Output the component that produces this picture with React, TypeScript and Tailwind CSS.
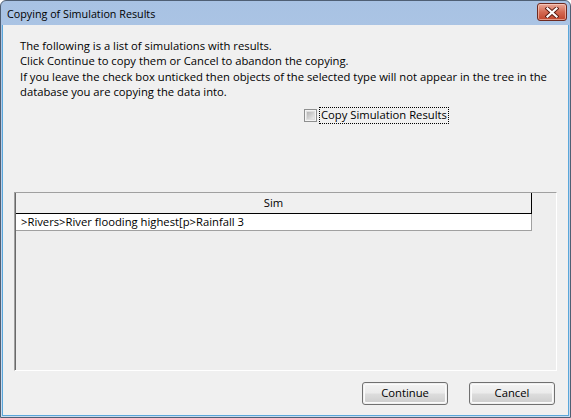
import React from "react";

const font = { fontFamily: '"Open Sans", "Noto Sans", sans-serif' };

function CloseButton() {
  return (
    <div className="w-[30px] h-[18px] rounded-[3px] border border-[#6e2a20] bg-gradient-to-b from-[#e9a99a] via-[#d46a52] to-[#c0442b] flex items-center justify-center shadow-[inset_0_0_0_1px_rgba(255,220,210,0.55)]">
      <svg width="14" height="11" viewBox="0 0 14 11">
        <path d="M2.5 1.5 L11.5 9.5 M11.5 1.5 L2.5 9.5" stroke="#5a1d14" strokeWidth="4" strokeLinecap="square" />
        <path d="M2.5 1.5 L11.5 9.5 M11.5 1.5 L2.5 9.5" stroke="#ffffff" strokeWidth="2.2" strokeLinecap="square" />
      </svg>
    </div>
  );
}

function Button({ label }: { label: string }) {
  return (
    <div className="w-[86px] h-[23px] rounded-[3px] border border-[#707070] p-px">
      <div className="w-full h-full rounded-[2px] border border-[#fbfbfb] bg-[linear-gradient(to_bottom,#f2f2f2_0%,#ebebeb_48%,#dddddd_52%,#cfcfcf_100%)] flex items-center justify-center text-[11.25px] text-black">
        {label}
      </div>
    </div>
  );
}

export default function App() {
  return (
    <div className="w-[571px] h-[418px] bg-white" style={font}>
      <div className="w-full h-full flex flex-col rounded-t-[6px] border border-[#4f5f74] bg-gradient-to-b from-[#a8c2e3] via-[#bbd1eb] to-[#c9dbef] overflow-hidden">
        <div className="h-[24px] flex items-center justify-between pl-[6px] pr-[3px] shrink-0">
          <span className="text-[10.75px] text-black leading-none mt-[2px]">Copying of Simulation Results</span>
          <div className="mt-[-2px]">
            <CloseButton />
          </div>
        </div>
        <div className="flex-1 mx-[1px] mb-[1px] border-l border-r border-b border-[#5aa7da] flex flex-col">
          <div className="flex-1 bg-[#f0f0f0] flex flex-col">
            <div className="pt-[13px] pl-[17px] text-[11.25px] leading-[15.3px] text-black whitespace-nowrap">
              <div>The following is a list of simulations with results.</div>
              <div>Click Continue to copy them or Cancel to abandon the copying.</div>
              <div>If you leave the check box unticked then objects of the selected type will not appear in the tree in the</div>
              <div>database you are copying the data into.</div>
            </div>
            <div className="mt-[8px] h-[17px] ml-[301px] flex items-center">
              <div className="w-[13px] h-[13px] border border-[#8e8f8f] p-px bg-[#f4f4f4]">
                <div className="w-full h-full border border-[#dedede] bg-gradient-to-br from-[#b4b4b4] to-[#ececec]" />
              </div>
              <div className="ml-[2px] h-[17px] px-[1px] border border-dotted border-black flex items-center text-[11.25px] text-black whitespace-nowrap">
                Copy Simulation Results
              </div>
            </div>
            <div className="mt-[68px] mx-[11px] h-[179px] border-t border-l border-[#a0a0a0] border-r border-b border-r-white border-b-white">
              <div className="w-full h-full border-l border-[#696969] bg-[#eeeeee] flex flex-col">
                <div className="w-[516px] h-[21px] border-b border-r border-black bg-[#f0f0f0] flex items-center justify-center text-[11.25px] text-black">
                  Sim
                </div>
                <div className="w-[516px] h-[17px] border-b border-r border-[#a0a0a0] bg-white flex items-center pl-[5px] text-[11.25px] text-black whitespace-nowrap">
                  &gt;Rivers&gt;River flooding highest[p&gt;Rainfall 3
                </div>
              </div>
            </div>
            <div className="mt-[11px] flex justify-end gap-[21px] pr-[13px]">
              <Button label="Continue" />
              <Button label="Cancel" />
            </div>
          </div>
        </div>
      </div>
    </div>
  );
}
